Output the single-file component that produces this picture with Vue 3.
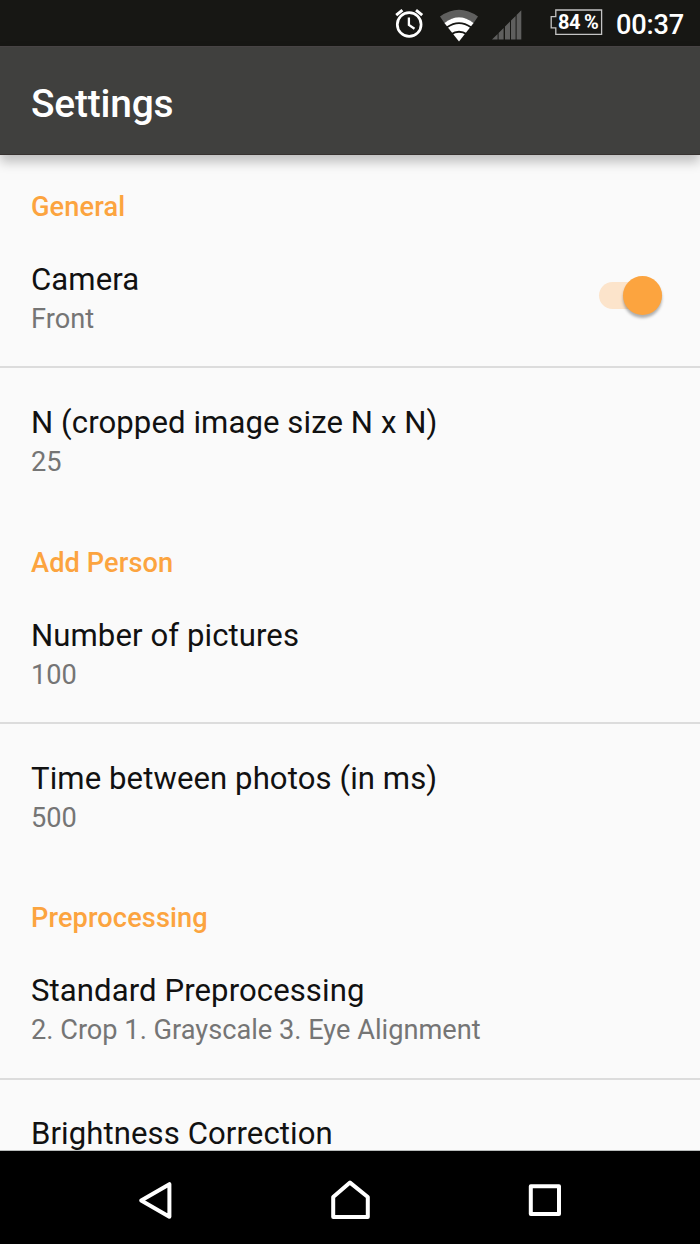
<template>
  <div class="screen">
    <header class="status-bar">
      <svg class="icon-alarm" width="32" height="32" viewBox="0 0 32 32" fill="none" stroke="#fff">
        <circle cx="16.2" cy="17.5" r="11.9" stroke-width="2.7" />
        <path d="M15.9 10.4V18l5.6 3.8" stroke-width="2.3" />
        <path d="M3.2 8.2L9.4 3.2M23 3.2l6.2 5" stroke-width="3" />
      </svg>
      <svg class="icon-wifi" width="40" height="34" viewBox="0 0 40 34">
        <path d="M1 8.5Q20 -5 39 8.5L34.6 15Q20 3.5 5.4 15z" fill="#5f5f5e" />
        <path d="M5.4 15Q20 3.5 34.6 15L20 33.5z" fill="#fff" />
        <path d="M8 19.2Q20 11 32 19.2M12 26.4Q20 21.2 28 26.4" fill="none" stroke="#171714" stroke-width="1.9" />
      </svg>
      <svg class="icon-signal" width="30" height="30" viewBox="0 0 30 30" fill="#5f5f5e">
        <path d="M0 29.5L5.6 24v5.5zM6.6 23l5-5v11.5h-5zM13 16.6l5-5v17.9h-5zM19 10.6l4.6-4.6v23.5H19zM24.6 5L29.3.3v29.2h-4.7z" />
      </svg>
      <div class="battery">
        <svg width="53" height="27" viewBox="0 0 53 27" fill="none" stroke="#c4c4c4" stroke-width="1.3">
          <path d="M5.8 1H51.6v24.4H5.8v-6.6H1.2V7.6h4.6z" />
        </svg>
        <span class="battery-level">84 %</span>
      </div>
      <span class="clock">00:37</span>
    </header>

    <div class="toolbar">
      <h1>Settings</h1>
    </div>

    <main class="content">
      <section v-for="group in groups" :key="group.name">
        <h2 class="category">{{ group.name }}</h2>
        <div v-for="item in group.items" :key="item.title" class="preference">
          <div class="preference-text">
            <div class="title">{{ item.title }}</div>
            <div class="summary">{{ item.summary }}</div>
          </div>
          <button
            v-if="item.toggle"
            class="switch"
            :class="{ on: frontCamera }"
            :aria-label="item.title"
            @click="frontCamera = !frontCamera"
          >
            <span class="thumb"></span>
          </button>
        </div>
      </section>
    </main>

    <nav class="nav-bar">
      <svg width="40" height="44" viewBox="0 0 40 44">
        <path d="M6.2 21.6L34.4 5.2v32.6z" />
      </svg>
      <svg width="44" height="44" viewBox="0 0 44 44">
        <path d="M5.2 18L22 3.6 39.8 18v20H5.2z" />
      </svg>
      <svg width="40" height="44" viewBox="0 0 40 44">
        <path d="M5.8 7.2h28.2v27.8H5.8z" />
      </svg>
    </nav>
  </div>
</template>

<script setup>
import { ref, computed } from 'vue';

const frontCamera = ref(true);

const groups = computed(() => [
  {
    name: 'General',
    items: [
      { title: 'Camera', summary: frontCamera.value ? 'Front' : 'Back', toggle: true },
      { title: 'N (cropped image size N x N)', summary: '25' },
    ],
  },
  {
    name: 'Add Person',
    items: [
      { title: 'Number of pictures', summary: '100' },
      { title: 'Time between photos (in ms)', summary: '500' },
    ],
  },
  {
    name: 'Preprocessing',
    items: [
      { title: 'Standard Preprocessing', summary: '2. Crop 1. Grayscale 3. Eye Alignment' },
      { title: 'Brightness Correction', summary: '' },
    ],
  },
]);
</script>

<style>
body {
  margin: 0;
}
</style>

<style scoped>
.screen {
  display: flex;
  flex-direction: column;
  height: 1244px;
  overflow: hidden;
  background-color: #fafafa;
  font-family: Roboto, sans-serif;
}

.status-bar {
  display: flex;
  flex: none;
  align-items: flex-start;
  box-sizing: border-box;
  height: 46px;
  padding-left: 393px;
  background-color: #171714;
  color: #fff;
}

.icon-alarm {
  margin-top: 7px;
}

.icon-wifi {
  margin: 8px 0 0 14px;
}

.icon-signal {
  margin: 10px 0 0 13px;
}

.battery {
  position: relative;
  margin: 9px 0 0 28px;
  height: 27px;
}

.battery svg {
  display: block;
}

.battery-level {
  position: absolute;
  top: 2px;
  left: 8px;
  font-size: 20px;
  font-weight: 700;
  line-height: 23px;
  letter-spacing: -0.5px;
  word-spacing: -0.5px;
  white-space: nowrap;
}

.clock {
  margin: 9px 0 0 13px;
  font-size: 27.2px;
  font-weight: 500;
  line-height: 32px;
  letter-spacing: -0.2px;
}

.toolbar {
  position: relative;
  z-index: 1;
  flex: none;
  box-sizing: border-box;
  height: 109px;
  padding: 34px 31px 0;
  border-top: 1px solid #474344;
  border-bottom: 1px solid #373230;
  background-color: #40403e;
  box-shadow: 0 7px 11px rgba(0, 0, 0, 0.24);
}

.toolbar h1 {
  margin: 0;
  color: #fff;
  font-size: 38.9px;
  font-weight: 500;
  line-height: 46px;
  letter-spacing: -0.2px;
}

.content {
  flex: 1;
  min-height: 0;
  overflow: hidden;
}

.category {
  box-sizing: border-box;
  height: 70px;
  margin: 0;
  padding: 36px 31px 0;
  color: #fca43f;
  font-size: 27.2px;
  font-weight: 500;
  line-height: 32px;
  letter-spacing: 0.1px;
}

.preference {
  display: flex;
  justify-content: space-between;
  box-sizing: border-box;
  height: 141px;
  padding: 36px 38px 0 31px;
}

.preference + .preference {
  height: 145px;
  border-top: 2px solid #dcdcdc;
}

section:last-child .category,
section:last-child .preference {
  padding-top: 35px;
}

.title {
  color: #111;
  font-size: 31.1px;
  line-height: 37px;
  letter-spacing: 0.09px;
}

.summary {
  margin-top: 5px;
  color: #757575;
  font-size: 27.2px;
  line-height: 32px;
}

.switch {
  position: relative;
  width: 63px;
  height: 27px;
  margin-top: 21px;
  padding: 0;
  border: none;
  border-radius: 14px;
  background-color: #d5d5d5;
  cursor: pointer;
}

.switch.on {
  background-color: #fce4cb;
}

.thumb {
  position: absolute;
  top: -6px;
  left: 0;
  width: 39px;
  height: 39px;
  border-radius: 50%;
  background-color: #f1f1f1;
  box-shadow: 0 3px 3px rgba(0, 0, 0, 0.3);
}

.switch.on .thumb {
  left: auto;
  right: 0;
  background-color: #fca43f;
}

.nav-bar {
  display: flex;
  flex: none;
  align-items: flex-start;
  justify-content: space-between;
  box-sizing: border-box;
  height: 94px;
  padding: 28px 135px 0;
  border-top: 1px solid #b9bcbb;
  background-color: #000;
}

.nav-bar svg {
  fill: none;
  stroke: #fff;
  stroke-width: 4;
  stroke-linejoin: round;
}
</style>
